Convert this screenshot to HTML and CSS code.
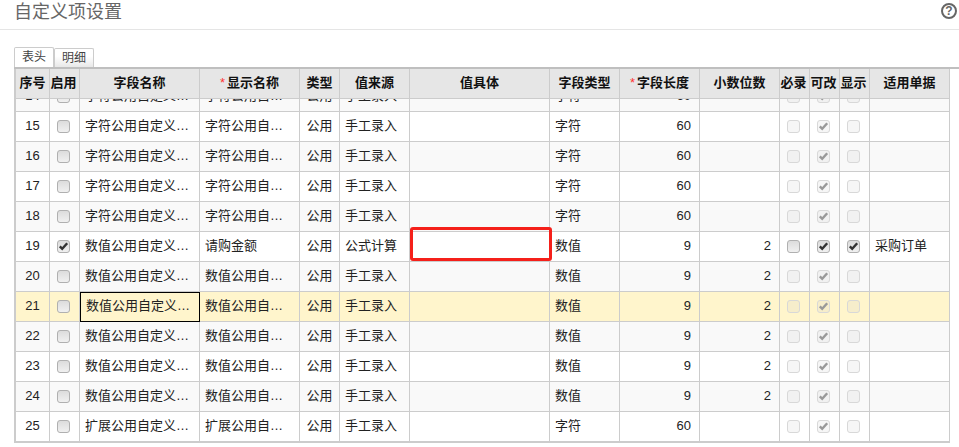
FILE: index.html
```html
<!DOCTYPE html>
<html lang="zh-CN">
<head>
<meta charset="utf-8">
<title>自定义项设置</title>
<link rel="stylesheet" href="styles.css">
</head>
<body>
<svg class="defs" aria-hidden="true"><symbol id="chk" viewBox="0 0 11 11"><path d="M1.8 5.4 L4.2 7.8 L9.2 2.2"/></symbol></svg>
<header class="page-head">
  <h1 class="page-title">自定义项设置</h1>
  <span class="help">?</span>
</header>
<nav class="tabs">
  <span class="tab tab-active">表头</span>
  <span class="tab">明细</span>
</nav>
<section class="grid">
  <table class="tbl tbl-head">
    <colgroup><col class="c1"><col class="c2"><col class="c3"><col class="c4"><col class="c5"><col class="c6"><col class="c7"><col class="c8"><col class="c9"><col class="c10"><col class="c11"><col class="c12"><col class="c13"><col class="c14"></colgroup>
    <thead><tr>
      <th>序号</th><th class="narrow">启用</th><th>字段名称</th><th><span class="req">*</span>显示名称</th><th>类型</th><th>值来源</th><th>值具体</th><th>字段类型</th><th><span class="req">*</span>字段长度</th><th>小数位数</th><th class="narrow">必录</th><th class="narrow">可改</th><th class="narrow">显示</th><th>适用单据</th>
    </tr></thead>
  </table>
  <div class="viewport">
    <table class="tbl tbl-body">
      <colgroup><col class="c1"><col class="c2"><col class="c3"><col class="c4"><col class="c5"><col class="c6"><col class="c7"><col class="c8"><col class="c9"><col class="c10"><col class="c11"><col class="c12"><col class="c13"><col class="c14"></colgroup>
      <tbody>
        <tr class="alt"><td class="ctr">14</td><td class="ctr"><span class="cb"></span></td><td class="txt">字符公用自定义项14</td><td class="txt">字符公用自定义项14</td><td class="ctr">公用</td><td class="txt">手工录入</td><td></td><td class="txt">字符</td><td class="num">60</td><td></td><td class="ctr"><span class="cb off"></span></td><td class="ctr"><span class="cb off"><svg class="tick"><use href="#chk"/></svg></span></td><td class="ctr"><span class="cb off"></span></td><td></td></tr>
        <tr><td class="ctr">15</td><td class="ctr"><span class="cb"></span></td><td class="txt">字符公用自定义项15</td><td class="txt">字符公用自定义项15</td><td class="ctr">公用</td><td class="txt">手工录入</td><td></td><td class="txt">字符</td><td class="num">60</td><td></td><td class="ctr"><span class="cb off"></span></td><td class="ctr"><span class="cb off"><svg class="tick"><use href="#chk"/></svg></span></td><td class="ctr"><span class="cb off"></span></td><td></td></tr>
        <tr class="alt"><td class="ctr">16</td><td class="ctr"><span class="cb"></span></td><td class="txt">字符公用自定义项16</td><td class="txt">字符公用自定义项16</td><td class="ctr">公用</td><td class="txt">手工录入</td><td></td><td class="txt">字符</td><td class="num">60</td><td></td><td class="ctr"><span class="cb off"></span></td><td class="ctr"><span class="cb off"><svg class="tick"><use href="#chk"/></svg></span></td><td class="ctr"><span class="cb off"></span></td><td></td></tr>
        <tr><td class="ctr">17</td><td class="ctr"><span class="cb"></span></td><td class="txt">字符公用自定义项17</td><td class="txt">字符公用自定义项17</td><td class="ctr">公用</td><td class="txt">手工录入</td><td></td><td class="txt">字符</td><td class="num">60</td><td></td><td class="ctr"><span class="cb off"></span></td><td class="ctr"><span class="cb off"><svg class="tick"><use href="#chk"/></svg></span></td><td class="ctr"><span class="cb off"></span></td><td></td></tr>
        <tr class="alt"><td class="ctr">18</td><td class="ctr"><span class="cb"></span></td><td class="txt">字符公用自定义项18</td><td class="txt">字符公用自定义项18</td><td class="ctr">公用</td><td class="txt">手工录入</td><td></td><td class="txt">字符</td><td class="num">60</td><td></td><td class="ctr"><span class="cb off"></span></td><td class="ctr"><span class="cb off"><svg class="tick"><use href="#chk"/></svg></span></td><td class="ctr"><span class="cb off"></span></td><td></td></tr>
        <tr><td class="ctr">19</td><td class="ctr"><span class="cb"><svg class="tick"><use href="#chk"/></svg></span></td><td class="txt">数值公用自定义项19</td><td class="txt">请购金额</td><td class="ctr">公用</td><td class="txt">公式计算</td><td class="mark-host"><span class="mark"></span></td><td class="txt">数值</td><td class="num">9</td><td class="num">2</td><td class="ctr"><span class="cb"></span></td><td class="ctr"><span class="cb"><svg class="tick"><use href="#chk"/></svg></span></td><td class="ctr"><span class="cb"><svg class="tick"><use href="#chk"/></svg></span></td><td class="txt">采购订单</td></tr>
        <tr class="alt"><td class="ctr">20</td><td class="ctr"><span class="cb"></span></td><td class="txt">数值公用自定义项20</td><td class="txt">数值公用自定义项20</td><td class="ctr">公用</td><td class="txt">手工录入</td><td></td><td class="txt">数值</td><td class="num">9</td><td class="num">2</td><td class="ctr"><span class="cb off"></span></td><td class="ctr"><span class="cb off"><svg class="tick"><use href="#chk"/></svg></span></td><td class="ctr"><span class="cb off"></span></td><td></td></tr>
        <tr class="cur"><td class="ctr">21</td><td class="ctr"><span class="cb"></span></td><td class="txt focus">数值公用自定义项21</td><td class="txt">数值公用自定义项21</td><td class="ctr">公用</td><td class="txt">手工录入</td><td></td><td class="txt">数值</td><td class="num">9</td><td class="num">2</td><td class="ctr"><span class="cb off"></span></td><td class="ctr"><span class="cb off"><svg class="tick"><use href="#chk"/></svg></span></td><td class="ctr"><span class="cb off"></span></td><td></td></tr>
        <tr class="alt"><td class="ctr">22</td><td class="ctr"><span class="cb"></span></td><td class="txt">数值公用自定义项22</td><td class="txt">数值公用自定义项22</td><td class="ctr">公用</td><td class="txt">手工录入</td><td></td><td class="txt">数值</td><td class="num">9</td><td class="num">2</td><td class="ctr"><span class="cb off"></span></td><td class="ctr"><span class="cb off"><svg class="tick"><use href="#chk"/></svg></span></td><td class="ctr"><span class="cb off"></span></td><td></td></tr>
        <tr><td class="ctr">23</td><td class="ctr"><span class="cb"></span></td><td class="txt">数值公用自定义项23</td><td class="txt">数值公用自定义项23</td><td class="ctr">公用</td><td class="txt">手工录入</td><td></td><td class="txt">数值</td><td class="num">9</td><td class="num">2</td><td class="ctr"><span class="cb off"></span></td><td class="ctr"><span class="cb off"><svg class="tick"><use href="#chk"/></svg></span></td><td class="ctr"><span class="cb off"></span></td><td></td></tr>
        <tr class="alt"><td class="ctr">24</td><td class="ctr"><span class="cb"></span></td><td class="txt">数值公用自定义项24</td><td class="txt">数值公用自定义项24</td><td class="ctr">公用</td><td class="txt">手工录入</td><td></td><td class="txt">数值</td><td class="num">9</td><td class="num">2</td><td class="ctr"><span class="cb off"></span></td><td class="ctr"><span class="cb off"><svg class="tick"><use href="#chk"/></svg></span></td><td class="ctr"><span class="cb off"></span></td><td></td></tr>
        <tr><td class="ctr">25</td><td class="ctr"><span class="cb"></span></td><td class="txt">扩展公用自定义项25</td><td class="txt">扩展公用自定义项25</td><td class="ctr">公用</td><td class="txt">手工录入</td><td></td><td class="txt">字符</td><td class="num">60</td><td></td><td class="ctr"><span class="cb off"></span></td><td class="ctr"><span class="cb off"><svg class="tick"><use href="#chk"/></svg></span></td><td class="ctr"><span class="cb off"></span></td><td></td></tr>
      </tbody>
    </table>
  </div>
</section>
</body>
</html>
```
FILE: styles.css
```css
* { box-sizing: border-box; }
html, body { margin: 0; height: 100%; }
body {
  overflow: hidden;
  background: #fff;
  color: #222;
  font: 13px "Liberation Sans", "Noto Sans CJK SC", sans-serif;
}
.defs { width: 0; height: 0; display: block; }
.page-head {
  height: 30px;
  border-bottom: 1px solid #e5e5e5;
  display: flex;
  align-items: flex-start;
  justify-content: space-between;
  padding: 0 2px 0 14px;
}
.page-title {
  margin: 0;
  font-size: 18px;
  font-weight: 400;
  line-height: 24px;
  color: #666;
}
.help {
  width: 16px;
  height: 16px;
  margin-top: 3px;
  border: 2px solid #666;
  border-radius: 50%;
  color: #666;
  font-size: 12px;
  font-weight: 700;
  line-height: 12px;
  text-align: center;
}
.tabs {
  margin: 17px 0 0 14px;
  height: 22px;
  border-bottom: 2px solid #bfbfbf;
  display: flex;
  align-items: flex-end;
}
.tab {
  width: 40px;
  height: 19px;
  border: 1px solid #ccc;
  border-bottom: 0;
  border-radius: 2px 2px 0 0;
  background: linear-gradient(#fff 40%, #e8e8e8);
  color: #444;
  font-size: 12px;
  line-height: 18px;
  text-align: center;
}
.tab-active {
  height: 20px;
  background: #fff;
  line-height: 19px;
}
.grid {
  width: 936px;
  margin-left: 14px;
  border-left: 2px solid #ccc;
  border-bottom: 1px solid #ccc;
}
.tbl {
  width: 934px;
  table-layout: fixed;
  border-collapse: separate;
  border-spacing: 0;
}
.c1 { width: 34px; }
.c2 { width: 30px; }
.c3 { width: 120px; }
.c4 { width: 100px; }
.c5 { width: 40px; }
.c6 { width: 70px; }
.c7 { width: 140px; }
.c8 { width: 70px; }
.c9 { width: 80px; }
.c10 { width: 80px; }
.c11, .c12, .c13 { width: 30px; }
.c14 { width: 80px; }
.tbl-head th {
  height: 30px;
  padding: 0 0 5px;
  background: #e6e6e6;
  border-right: 1px solid #ccc;
  border-bottom: 1px solid #ccc;
  color: #111;
  font-size: 13px;
  font-weight: 700;
  white-space: nowrap;
  overflow: hidden;
}
.tbl-head .narrow { padding-right: 2px; }
.req { color: #f33; font-weight: 400; margin-right: 2px; }
.viewport {
  height: 343px;
  overflow: hidden;
}
.tbl-body { margin-top: -17px; }
.tbl-body td {
  height: 30px;
  padding: 0 5px 4px;
  border-right: 1px solid #ccc;
  border-bottom: 1px solid #ccc;
  background: #fff;
  color: #222;
  white-space: nowrap;
}
.tbl-body .alt td { background: #f9f9f9; }
.tbl-body .cur td { background: #fff5cc; }
.tbl-body .ctr { text-align: center; padding: 0 0 4px; }
.tbl-body td:first-child { padding-bottom: 2px; }
.tbl-body .txt { overflow: hidden; text-overflow: ellipsis; }
.tbl-body .num { text-align: right; padding-right: 8px; padding-bottom: 2px; }
.tbl-body .focus {
  padding-left: 6px;
  outline: 1px solid #000;
  outline-offset: -1px;
}
.cb {
  display: inline-block;
  width: 13px;
  height: 13px;
  margin: 4px 2px 0 0;
  vertical-align: top;
  border: 1px solid #b0b0b0;
  border-radius: 3px;
  background: linear-gradient(#dcdcdc, #f0f0f0);
  color: #333;
}
.cb.off {
  border-color: #d8d8d8;
  background: rgba(200, 200, 200, 0.16);
  color: #999;
}
.tick {
  display: block;
  width: 11px;
  height: 11px;
  fill: none;
  stroke: currentColor;
  stroke-width: 2.4;
}
.mark-host { position: relative; }
.mark {
  position: absolute;
  left: 0;
  top: -5px;
  width: 142px;
  height: 34px;
  border: 3px solid #f5201a;
  border-radius: 3px;
}
```
